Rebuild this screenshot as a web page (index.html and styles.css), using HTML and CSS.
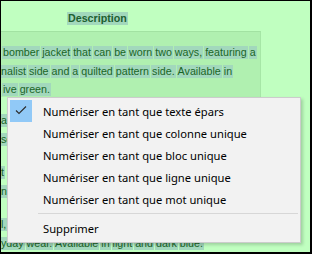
FILE: index.html
```html
<!DOCTYPE html>
<html>
<head>
    <title>Description</title>
    <meta name="viewport" content="width=device-width, initial-scale=1.0">
    <link rel="stylesheet" href="styles.css">
</head>
<body>
    <div class="frame">
        <div class="title"><span class="w">Description</span></div>

        <div class="desc">
            <div class="line first"><span class="w">bomber</span> <span class="w">jacket</span> <span class="w">that</span> <span class="w">can</span> <span class="w">be</span> <span class="w">worn</span> <span class="w">two</span> <span class="w">ways,</span> <span class="w">featuring</span> <span class="w">a</span></div>
            <div class="line second"><span class="w">nalist</span> <span class="w">side</span> <span class="w">and</span> <span class="w">a</span> <span class="w">quilted</span> <span class="w">pattern</span> <span class="w">side.</span> <span class="w">Available</span> <span class="w">in</span></div>
            <div class="line third"><span class="w">ive</span> <span class="w">green.</span></div>
        </div>

        <div class="more">
            <div class="line"><span class="w">ar</span></div>
            <div class="line"><span class="w">sc</span></div>
            <div class="line gap"><span class="w">t</span></div>
            <div class="line"><span class="w">n</span></div>
            <div class="line gap"><span class="w">l,</span></div>
            <div class="line last"><span class="w">yday</span> <span class="w">wear.</span> <span class="w">Available</span> <span class="w">in</span> <span class="w">light</span> <span class="w">and</span> <span class="w">dark</span> <span class="w">blue.</span></div>
        </div>

        <div class="menu">
            <div class="item checked">
                <span class="icon">
                    <svg width="22" height="22" viewBox="0 0 22 22">
                        <path d="M6 10.5 L9 13.5 L16 6.5" fill="none" stroke="#2b2b2b" stroke-width="1.1"/>
                    </svg>
                </span>
                <span class="label">Numériser en tant que texte épars</span>
            </div>
            <div class="item">
                <span class="icon"></span>
                <span class="label">Numériser en tant que colonne unique</span>
            </div>
            <div class="item">
                <span class="icon"></span>
                <span class="label">Numériser en tant que bloc unique</span>
            </div>
            <div class="item">
                <span class="icon"></span>
                <span class="label">Numériser en tant que ligne unique</span>
            </div>
            <div class="item">
                <span class="icon"></span>
                <span class="label">Numériser en tant que mot unique</span>
            </div>
            <div class="separator"></div>
            <div class="item">
                <span class="icon"></span>
                <span class="label">Supprimer</span>
            </div>
        </div>
    </div>
</body>
</html>
```

FILE: styles.css
```css
:root {
    --page: #c0ffc0;
    --box: #b0f0b0;
    --word: #a2d8bc;
    --ink: #1a6527;
    --menu: #f2f2f2;
    --check: #91c9f7;
}

* {
    margin: 0;
    padding: 0;
    box-sizing: border-box;
}

body {
    width: 312px;
    height: 254px;
    overflow: hidden;
}

.frame {
    position: relative;
    width: 312px;
    height: 254px;
    overflow: hidden;
    background: var(--page);
    border-top: 1px solid #000;
    border-left: 1px solid #000;
    border-right: 2px solid #000;
    border-bottom: 2px solid #000;
    font-family: 'Liberation Sans', Arial, sans-serif;
    font-size: 10.7px;
    color: var(--ink);
}

.w {
    display: inline-block;
    background: var(--word);
    line-height: 13px;
    padding: 0 1px;
    margin: 0 -1px;
}

.title {
    height: 30px;
    padding: 10px 0 0 67px;
    line-height: 14px;
    font-weight: bold;
    color: #205f30;
}

.desc {
    width: 260px;
    height: 66px;
    background: var(--box);
    border-top: 1px solid #a2e2a2;
    border-right: 1px solid #a6e6a6;
    padding-top: 11px;
}

.line {
    height: 18.5px;
    line-height: 18.5px;
    white-space: nowrap;
}

.desc .first {
    padding-left: 2px;
}

.desc .third {
    padding-left: 2px;
}

.more {
    padding-top: 14px;
}

.more .gap {
    margin-top: 15px;
}

.more .last {
    margin-top: 0;
}

.menu {
    position: absolute;
    left: 6px;
    top: 96px;
    width: 294px;
    height: 146px;
    background: var(--menu);
    border: 1px solid #cccccc;
    box-shadow: 2px 2px 3px rgba(0, 0, 0, 0.18);
    padding: 2px;
    font-family: 'Noto Sans', 'Open Sans', sans-serif;
    font-size: 11.2px;
    color: #000;
}

.item {
    display: flex;
    align-items: center;
    height: 22px;
}

.icon {
    width: 22px;
    height: 22px;
    flex: none;
}

.icon svg {
    display: block;
}

.checked .icon {
    background: var(--check);
}

.label {
    padding-left: 11px;
    white-space: nowrap;
}

.separator {
    height: 7px;
    margin-left: 28px;
    border-top: 3px solid transparent;
}

.separator::after {
    content: "";
    display: block;
    height: 1px;
    background: #d7d7d7;
}
```
